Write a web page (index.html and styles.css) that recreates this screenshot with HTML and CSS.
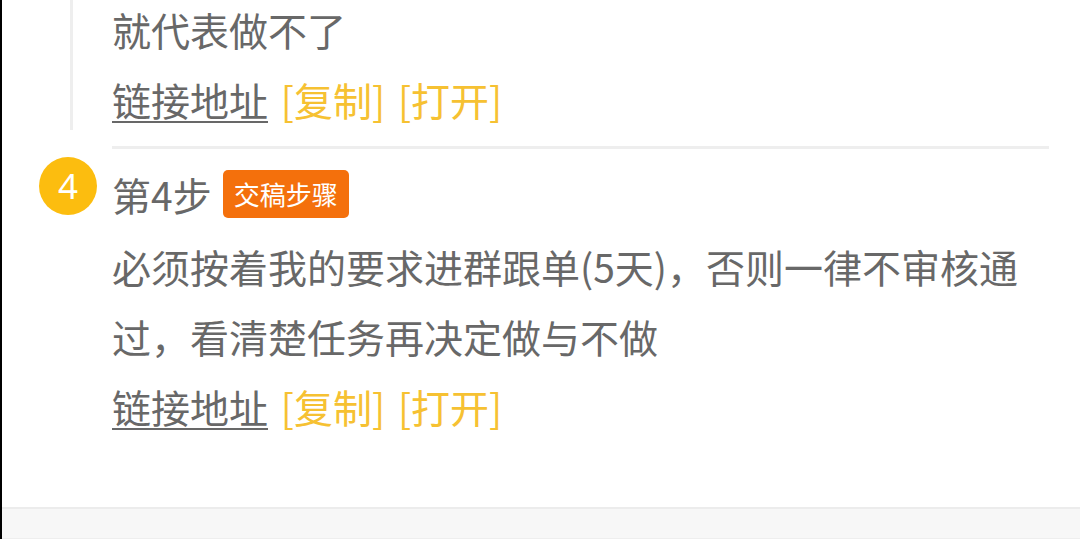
FILE: index.html
```html
<!DOCTYPE html>
<html lang="zh-CN">
<head>
<meta charset="utf-8">
<link rel="stylesheet" href="styles.css">
</head>
<body>
<div class="page">
  <div class="step step-prev">
    <div class="rail"><div class="rail-line"></div></div>
    <div class="content">
      <div class="desc first">就代表做不了</div>
      <div class="links"><span class="addr">链接地址</span> <span class="act">[复制]</span> <span class="act">[打开]</span></div>
    </div>
  </div>
  <div class="step step-cur">
    <div class="rail"><div class="num">4</div></div>
    <div class="content bordered">
      <div class="title"><span class="title-text">第4步</span><span class="badge">交稿步骤</span></div>
      <div class="desc">必须按着我的要求进群跟单(5天)，否则一律不审核通过，看清楚任务再决定做与不做</div>
      <div class="links"><span class="addr">链接地址</span> <span class="act">[复制]</span> <span class="act">[打开]</span></div>
    </div>
  </div>
  <div class="spacer"></div>
  <div class="footer"></div>
</div>
</body>
</html>
```

FILE: styles.css
```css
html, body {
  margin: 0;
  padding: 0;
  background: #ffffff;
}
body {
  font-family: "Noto Sans CJK SC", "Noto Sans", sans-serif;
  color: #686868;
}
.page {
  width: 1078px;
  height: 539px;
  border-left: 2px solid #000000;
  display: flex;
  flex-direction: column;
  overflow: hidden;
}
.step {
  display: flex;
}
.rail {
  width: 110px;
  flex: none;
  display: flex;
}
.step-prev .rail-line {
  width: 3px;
  margin-left: 68px;
  margin-bottom: 4px;
  background: #eeeeee;
}
.content {
  flex: 1;
  margin-right: 31px;
}
.desc {
  font-size: 39px;
  line-height: 70px;
}
.desc.first {
  line-height: 64px;
  margin-top: -3px;
  margin-bottom: 3px;
}
.links {
  font-size: 39px;
  line-height: 70px;
  word-spacing: 4px;
}
.addr {
  text-decoration: underline;
  text-decoration-thickness: 2px;
  text-underline-offset: 5px;
  color: #686868;
}
.act {
  color: #f6c132;
}
.step-cur {
  margin-top: 12px;
}
.bordered {
  border-top: 3px solid #eeeeee;
}
.num {
  width: 58px;
  height: 58px;
  border-radius: 50%;
  background: #fcbd0f;
  color: #ffffff;
  font-family: "Noto Sans", sans-serif;
  font-size: 35px;
  line-height: 58px;
  text-align: center;
  margin-left: 37px;
  margin-top: 11px;
}
.title {
  display: flex;
  align-items: center;
  margin-top: 21px;
  margin-bottom: 13px;
  height: 48px;
}
.title-text {
  font-size: 39px;
  color: #686868;
}
.badge {
  margin-left: 11px;
  background: #f4700c;
  color: #ffffff;
  font-size: 26px;
  line-height: 48px;
  height: 48px;
  padding: 0 11px;
  border-radius: 5px;
}
.spacer {
  flex: 1;
}
.footer {
  height: 29px;
  flex: none;
  background: #f7f7f7;
  border-top: 2px solid #ececec;
  border-bottom: 1px solid #eeeeee;
}
```
